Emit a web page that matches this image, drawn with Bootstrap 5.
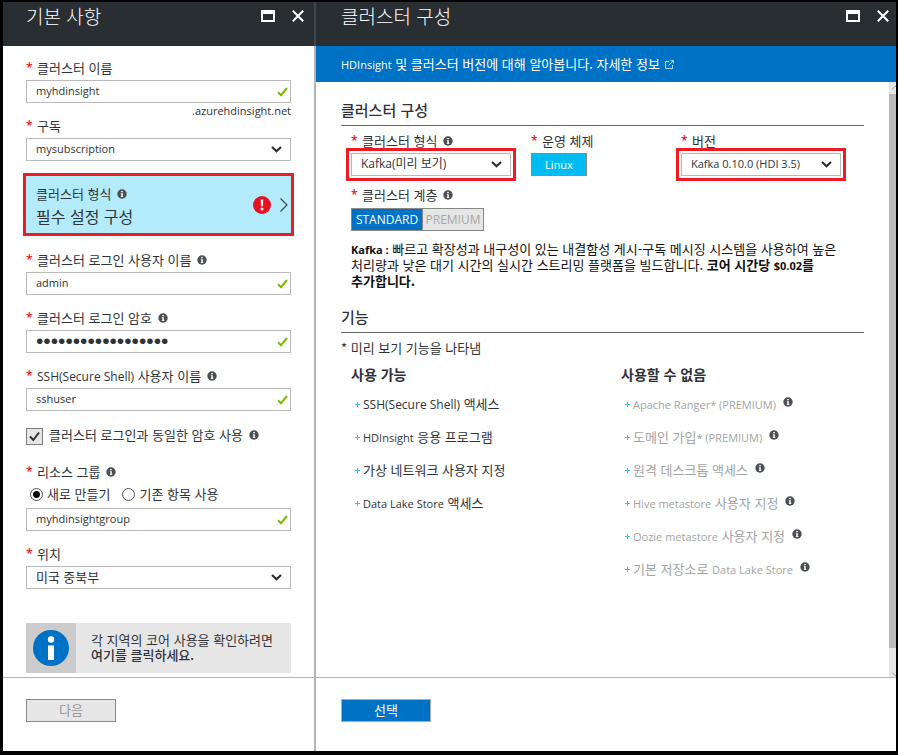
<!DOCTYPE html>
<html lang="ko">
<head>
<meta charset="utf-8">
<meta name="viewport" content="width=device-width, initial-scale=1">
<title>클러스터 구성</title>
<link href="https://cdn.jsdelivr.net/npm/bootstrap@5.3.0/dist/css/bootstrap.min.css" rel="stylesheet">
<style>
  body { background: #000; color: #2f3338; font: 13px/14px "Noto Sans CJK KR", sans-serif; }
  .portal { display: grid; grid-template-columns: 313fr 580fr; min-height: 100vh; border: solid #000; border-width: 2px 2px 4px 3px; }
  /* Latin runs inside Korean text */
  .la { font-family: "Open Sans", sans-serif; font-size: 11px; line-height: 1; }
  .la.lg { font-size: 12px; }
  .blade { background: #fff; min-width: 0; }
  .blade-head { background: #292e33; color: #fff; height: 44px; padding: 0 7px 16px 25px; }
  .blade-head.first { border-right: 2px solid #3f4448; padding-left: 23px; padding-right: 10px; }
  .blade-head h1 { font-size: 19px; line-height: 28px; font-weight: 300; margin: 0; }
  .win-btn { border: 0; background: none; padding: 0; line-height: 0; color: #fff; }
  .win-btn + .win-btn { margin-left: 17px; }
  .first-rest { border-right: 2px solid #b4b4b4; }
  .form-area { padding: 15px 23px 4px; }
  .blade-foot { border-top: 1px solid #b4b4b4; padding: 21px 23px 29px; }
  .blade-foot.wide { padding-left: 25px; }
  .fld-label { display: flex; align-items: center; line-height: 14px; margin-bottom: 5px; }
  .fld-label .info { margin-left: 6px; }
  .fld-label.req::before { content: "*"; width: 11px; color: #e81123; font-family: "Open Sans", sans-serif; font-size: 12px; font-weight: 600; }
  .fld { margin-bottom: 16px; }
  .info { width: 10px; height: 10px; flex: none; color: #4b4f54; }
  .form-control, .form-select { height: 23px; padding: 0 24px 2px 9px; border: 1px solid #bababa; border-radius: 0; font-family: "Open Sans", "Noto Sans CJK KR", sans-serif; font-size: 11px; line-height: 18px; color: #2f3338; background-repeat: no-repeat; }
  .form-control { background-position: right 2px center; background-size: 11px 11px;
    background-image: url("data:image/svg+xml,%3Csvg xmlns='http://www.w3.org/2000/svg' viewBox='0 0 11 11'%3E%3Cpath d='M1 6.2l3 3L10 2' fill='none' stroke='%237fba00' stroke-width='2'/%3E%3C/svg%3E"); }
  .form-select { background-position: right 8px center; background-size: 11px 7px; padding-left: 9px;
    background-image: url("data:image/svg+xml,%3Csvg xmlns='http://www.w3.org/2000/svg' viewBox='0 0 11 7'%3E%3Cpath d='M1 1l4.500 4.300L10 1' fill='none' stroke='%23292e33' stroke-width='2.200'/%3E%3C/svg%3E"); }
  .form-select.mixed { font-size: 12px; }
  .form-select.hangul { font-size: 13px; }
  .form-control.secret { font-family: "Liberation Sans", sans-serif; font-size: 21px; }
  .marked { outline: 3px solid #ed1c24; outline-offset: 2px; }
  .suffix { line-height: 16px; text-align: right; }
  .picker { display: flex; align-items: center; width: calc(100% + 6px); margin: 12px -3px 17px; height: 63px; padding: 0 2px 0 10px; border: 3px solid #ed1c24; background: #b3ebfb; color: inherit; text-align: left; }
  .picker .words { padding-top: 4px; }
  .picker .value { font-size: 16px; line-height: 20px; }
  .same-pw { margin: 17px 0 20px; gap: 6px; height: 17px; }
  .tick { appearance: none; width: 17px; height: 17px; margin: 0; border: 1px solid #7c7c7c; background: #e6e6e6 center/11px no-repeat; flex: none; }
  .tick:checked { background-image: url("data:image/svg+xml,%3Csvg xmlns='http://www.w3.org/2000/svg' viewBox='0 0 11 11'%3E%3Cpath d='M1 5.500l3.300 3.500L10 1.500' fill='none' stroke='%23292e33' stroke-width='2'/%3E%3C/svg%3E"); }
  .radios { align-items: center; height: 16px; margin: 7px 0 6px; padding-left: 4px; }
  .radios .second { margin-left: 12px; }
  .dot { appearance: none; width: 13px; height: 13px; margin: 0 4px 0 0; border: 1px solid #555; border-radius: 50%; background: #fff; flex: none; }
  .dot:checked { background: radial-gradient(circle, #000 3px, #fff 4px); }
  .note { margin-top: 34px; background: #e6e6e6; min-height: 50px; }
  .note-icon { width: 50px; background: #ccc; flex: none; }
  .note p { line-height: 15px; padding: 0 0 2px 15px; }
  .note a { color: inherit; text-decoration: none; font-weight: 500; }
  .foot-btn { width: 90px; height: 23px; padding: 0 0 2px; border-radius: 0; border: 1px solid #adadad; font-size: 13px; line-height: 19px; }
  .foot-btn:disabled { background: #e6e6e6; color: #999; border-color: #888; opacity: 1; }
  .blue { background: #0072c6; color: #fff; }
  .banner { height: 36px; padding-left: 25px; gap: 5px; }
  .banner a { color: inherit; text-decoration: none; }
  .content { padding: 18px 25px 0; }
  .sect { font-size: 15px; line-height: 20px; font-weight: 500; padding-bottom: 5px; border-bottom: 1px solid #666; margin: 0; }
  .trio { display: grid; grid-template-columns: 180fr 150fr 183fr; padding: 8px 0 12px 10px; }
  .trio .form-select { width: 160px; }
  .linux, .tier .btn { height: 23px; padding: 0; border: 1px solid #888; border-radius: 0; font-family: "Open Sans", sans-serif; font-size: 11px; line-height: 20px; }
  .linux { width: 56px; background: #00bcf2; color: #fff; }
  .tier-area { padding-left: 10px; }
  .tier-area .fld-label { margin-bottom: 6px; }
  .tier .btn { font-size: 12px; width: 72px; flex: none; }
  .tier .off { width: 62px; background: #e6e6e6; color: #a6a6a6; opacity: 1; }
  .desc { color: #111; line-height: 16px; margin: 10px 24px 18px 0; word-break: keep-all; }
  .legend-note { line-height: 16px; margin: 7px 0 8px; }
  .feats { display: grid; grid-template-columns: 270fr 243fr; padding-left: 10px; }
  .feats h3 { font-size: 14px; line-height: 20px; font-weight: 700; margin: 0 0 13px; }
  .feats li { display: flex; align-items: center; height: 14px; line-height: 14px; margin-bottom: 19px; padding-left: 4px; }
  .feats li::before { content: ""; width: 5px; height: 5px; margin-right: 3px; flex: none; background: linear-gradient(#2cc5f0, #2cc5f0) center/5px 1px no-repeat, linear-gradient(#2cc5f0, #2cc5f0) center/1px 5px no-repeat; }
  .feats .muted { color: #a3a3a3; }
  .feats .info { margin: 0 0 4px 7px; }
  .rail { width: 7px; background: #e6e6e6; flex: none; }
  .rail .thumb { background: #b9b9b9; flex: 1; margin: 0 0 17px; }
</style>
</head>
<body>
<svg width="0" height="0" class="d-none" aria-hidden="true">
  <symbol id="i-info" viewBox="0 0 10 10"><circle cx="5" cy="5" r="4.700" fill="currentColor"/><path d="M4.200 2h1.600v1.300H4.200zM3.800 4.200h2v3h.6v.8H3.800v-.8h.5V5h-.5z" fill="#fff"/></symbol>
  <symbol id="i-max" viewBox="0 0 14 12"><path d="M0 0h14v12H0zM2 4v6h10V4z" fill="currentColor" fill-rule="evenodd"/></symbol>
  <symbol id="i-close" viewBox="0 0 12 12"><path d="M.8.8l10.400 10.400M11.200.8L.8 11.200" stroke="currentColor" stroke-width="2"/></symbol>
</svg>
<div class="portal">
  <section class="blade d-flex flex-column">
    <header class="blade-head first d-flex align-items-center">
      <h1 class="me-auto">기본 사항</h1>
      <button class="win-btn" aria-label="최대화"><svg width="14" height="12"><use href="#i-max"/></svg></button>
      <button class="win-btn" aria-label="닫기"><svg width="12" height="12"><use href="#i-close"/></svg></button>
    </header>
    <div class="first-rest d-flex flex-column flex-grow-1">
      <form class="form-area flex-grow-1">
        <label class="fld-label req" for="cname">클러스터 이름</label>
        <input class="form-control" id="cname" value="myhdinsight">
        <div class="suffix la">.azurehdinsight.net</div>
        <label class="fld-label req" for="sub">구독</label>
        <select class="form-select" id="sub"><option>mysubscription</option></select>

        <button type="button" class="picker">
          <span class="words me-auto d-block">
            <span class="fld-label">클러스터 형식 <svg class="info"><use href="#i-info"/></svg></span>
            <span class="value d-block">필수 설정 구성</span>
          </span>
          <svg width="18" height="18" viewBox="0 0 18 18"><circle cx="9" cy="9" r="9" fill="#e81123"/><path d="M7.700 3.500h2.600l-.4 6.800H8.100z" fill="#fff"/><circle cx="9" cy="13" r="1.500" fill="#fff"/></svg>
          <svg class="ms-2" width="10" height="16" viewBox="0 0 10 16"><path d="M1.500 1.500L8 8l-6.500 6.500" fill="none" stroke="#3a4a52" stroke-width="1.200"/></svg>
        </button>

        <div class="fld">
          <label class="fld-label req" for="login">클러스터 로그인 사용자 이름 <svg class="info"><use href="#i-info"/></svg></label>
          <input class="form-control" id="login" value="admin">
        </div>
        <div class="fld">
          <label class="fld-label req" for="pw">클러스터 로그인 암호 <svg class="info"><use href="#i-info"/></svg></label>
          <input class="form-control secret" type="password" id="pw" value="passwordpassword12">
        </div>
        <label class="fld-label req" for="ssh"><span><span class="la lg">SSH(Secure Shell)</span> 사용자 이름</span> <svg class="info"><use href="#i-info"/></svg></label>
        <input class="form-control" id="ssh" value="sshuser">

        <div class="same-pw d-flex">
          <input class="tick" type="checkbox" id="same" checked>
          <label class="fld-label mb-1" for="same">클러스터 로그인과 동일한 암호 사용 <svg class="info"><use href="#i-info"/></svg></label>
        </div>

        <label class="fld-label req mb-0" for="group">리소스 그룹 <svg class="info"><use href="#i-info"/></svg></label>
        <div class="radios d-flex">
          <input class="dot" type="radio" name="rg" id="rg-new" checked><label for="rg-new">새로 만들기</label>
          <input class="dot second" type="radio" name="rg" id="rg-old"><label for="rg-old">기존 항목 사용</label>
        </div>
        <input class="form-control mb-3" id="group" value="myhdinsightgroup">
        <label class="fld-label req" for="loc">위치</label>
        <select class="form-select hangul" id="loc"><option>미국 중북부</option></select>

        <div class="note d-flex">
          <div class="note-icon d-flex align-items-center justify-content-center">
            <svg width="36" height="36" viewBox="0 0 36 36"><circle cx="18" cy="18" r="18" fill="#0072c6"/><circle cx="18" cy="9.500" r="3.200" fill="#fff"/><path d="M15 15.500h6V30h-6z" fill="#fff"/></svg>
          </div>
          <p class="m-0 align-self-center">각 지역의 코어 사용을 확인하려면 <a class="d-block" href="#">여기를 클릭하세요.</a></p>
        </div>
      </form>
      <footer class="blade-foot"><button class="btn foot-btn d-block" disabled>다음</button></footer>
    </div>
  </section>

  <section class="blade d-flex flex-column">
    <header class="blade-head d-flex align-items-center">
      <h1 class="me-auto">클러스터 구성</h1>
      <button class="win-btn" aria-label="최대화"><svg width="14" height="12"><use href="#i-max"/></svg></button>
      <button class="win-btn" aria-label="닫기"><svg width="12" height="12"><use href="#i-close"/></svg></button>
    </header>
    <div class="banner blue d-flex align-items-center">
      <a href="#"><span class="la">HDInsight</span> 및 클러스터 버전에 대해 알아봅니다. 자세한 정보</a>
      <svg width="9" height="9" viewBox="0 0 9 9"><path d="M4 1.500H.5v7h7V5M5.500.5h3v3M8.500.5L3.500 5.500" fill="none" stroke="#b8dcf5"/></svg>
    </div>
    <div class="d-flex flex-grow-1">
      <div class="content flex-grow-1">
        <h2 class="sect">클러스터 구성</h2>
        <div class="trio">
          <div>
            <label class="fld-label req" for="ctype">클러스터 형식 <svg class="info"><use href="#i-info"/></svg></label>
            <select class="form-select mixed marked" id="ctype"><option>Kafka(미리 보기)</option></select>
          </div>
          <div>
            <span class="fld-label req" id="os-l">운영 체제</span>
            <button class="btn linux d-block" aria-describedby="os-l">Linux</button>
          </div>
          <div>
            <label class="fld-label req" for="ver">버전</label>
            <select class="form-select marked" id="ver"><option>Kafka 0.10.0 (HDI 3.5)</option></select>
          </div>
        </div>
        <div class="tier-area">
          <span class="fld-label req" id="tier-l">클러스터 계층 <svg class="info"><use href="#i-info"/></svg></span>
          <div class="tier btn-group d-flex" role="group" aria-labelledby="tier-l">
            <button class="btn blue">STANDARD</button><button class="btn off" disabled>PREMIUM</button>
          </div>
          <p class="desc"><strong class="la">Kafka :</strong> 빠르고 확장성과 내구성이 있는 내결함성 게시-구독 메시징 시스템을 사용하여 높은 처리량과 낮은 대기 시간의 실시간 스트리밍 플랫폼을 빌드합니다. <strong>코어 시간당 <span class="la">$0.02</span>를 추가합니다.</strong></p>
        </div>
        <h2 class="sect">기능</h2>
        <p class="legend-note">* 미리 보기 기능을 나타냄</p>
        <div class="feats">
          <div>
            <h3>사용 가능</h3>
            <ul class="list-unstyled m-0">
              <li><span><span class="la lg">SSH(Secure Shell)</span> 액세스</span></li>
              <li><span><span class="la">HDInsight</span> 응용 프로그램</span></li>
              <li>가상 네트워크 사용자 지정</li>
              <li><span><span class="la">Data Lake Store</span> 액세스</span></li>
            </ul>
          </div>
          <div>
            <h3>사용할 수 없음</h3>
            <ul class="list-unstyled m-0 muted">
              <li><span class="la">Apache Ranger* (PREMIUM)</span><svg class="info"><use href="#i-info"/></svg></li>
              <li><span>도메인 가입<span class="la">* (PREMIUM)</span></span><svg class="info"><use href="#i-info"/></svg></li>
              <li>원격 데스크톱 액세스<svg class="info"><use href="#i-info"/></svg></li>
              <li><span><span class="la">Hive metastore</span> 사용자 지정</span><svg class="info"><use href="#i-info"/></svg></li>
              <li><span><span class="la">Oozie metastore</span> 사용자 지정</span><svg class="info"><use href="#i-info"/></svg></li>
              <li><span>기본 저장소로 <span class="la">Data Lake Store</span></span><svg class="info"><use href="#i-info"/></svg></li>
            </ul>
          </div>
        </div>
      </div>
      <div class="rail d-flex flex-column" aria-hidden="true">
        <svg width="7" height="12" viewBox="0 0 7 12"><path d="M3 7.500l3-3h1" fill="none" stroke="#999"/></svg>
        <div class="thumb"></div>
        <svg width="7" height="12" viewBox="0 0 7 12"><path d="M3 7.500l3 3h1" fill="none" stroke="#999"/></svg>
      </div>
    </div>
    <footer class="blade-foot wide"><button class="btn foot-btn blue d-block">선택</button></footer>
  </section>
</div>
</body>
</html>
